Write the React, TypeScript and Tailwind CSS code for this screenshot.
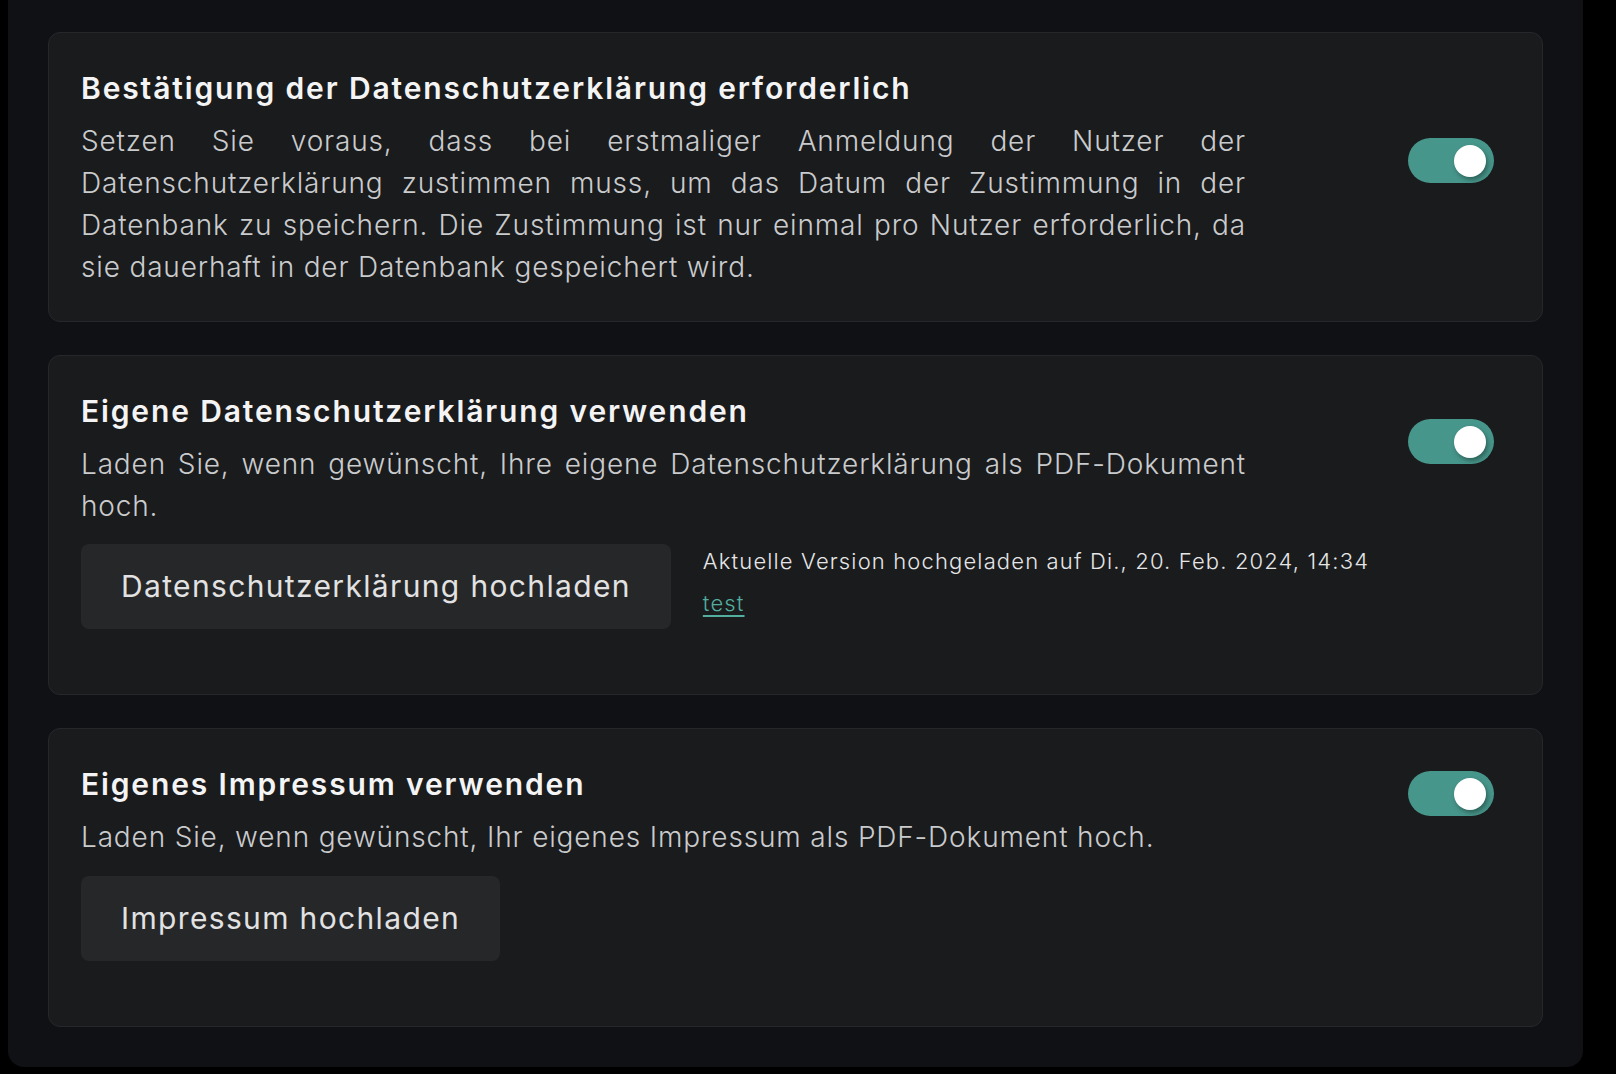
import React from 'react';

const Toggle: React.FC = () => (
  <div className="mb-[33px] mr-4 flex h-[45px] w-[86px] shrink-0 items-center justify-end rounded-full bg-[#47968b] pr-2">
    <div className="h-8 w-8 rounded-full bg-white shadow-[2px_3px_5px_rgba(0,0,0,0.35)]" />
  </div>
);

type SettingProps = {
  title: string;
  desc: string;
  children?: React.ReactNode;
};

const SettingCard: React.FC<SettingProps> = ({ title, desc, children }) => (
  <div className="rounded-xl border border-[#25272a] bg-[#1a1b1d] px-8 py-[33px]">
    <div className="flex items-center justify-between">
      <div className="w-[1165px]">
        <h3 className="text-[30px] font-semibold leading-[45px] tracking-[0.062em] text-[#f4f4f5]">{title}</h3>
        <p className="mt-[9px] text-justify text-[28px] font-light leading-[42px] tracking-[0.03em] text-[#cacbcd]">{desc}</p>
      </div>
      <Toggle />
    </div>
    {children}
  </div>
);

const UploadButton: React.FC<{ label: string }> = ({ label }) => (
  <button className="h-[85px] shrink-0 rounded-lg bg-[#262728] px-10 text-[30px] font-normal tracking-[0.045em] text-[#e2e2e3]">
    {label}
  </button>
);

const App: React.FC = () => {
  return (
    <div className="min-h-screen bg-black pl-2" style={{ fontFamily: 'Inter, "Open Sans", "Noto Sans", sans-serif' }}>
      <div className="flex w-[1575px] flex-col gap-[33px] rounded-b-2xl bg-[#101114] px-10 pb-10 pt-8">
        {/* Privacy consent */}
        <SettingCard
          title="Bestätigung der Datenschutzerklärung erforderlich"
          desc="Setzen Sie voraus, dass bei erstmaliger Anmeldung der Nutzer der Datenschutzerklärung zustimmen muss, um das Datum der Zustimmung in der Datenbank zu speichern. Die Zustimmung ist nur einmal pro Nutzer erforderlich, da sie dauerhaft in der Datenbank gespeichert wird."
        />

        {/* Own privacy policy */}
        <SettingCard
          title="Eigene Datenschutzerklärung verwenden"
          desc="Laden Sie, wenn gewünscht, Ihre eigene Datenschutzerklärung als PDF-Dokument hoch."
        >
          <div className="mb-8 mt-[17px] flex items-start gap-8">
            <UploadButton label="Datenschutzerklärung hochladen" />
            <div className="-mt-1 text-[22px] font-light leading-[42px] tracking-[0.052em] text-[#e6e6e7]">
              <div>Aktuelle Version hochgeladen auf Di., 20. Feb. 2024, 14:34</div>
              <a href="#" className="text-[#52ae9f] underline underline-offset-4">test</a>
            </div>
          </div>
        </SettingCard>

        {/* Own imprint */}
        <SettingCard
          title="Eigenes Impressum verwenden"
          desc="Laden Sie, wenn gewünscht, Ihr eigenes Impressum als PDF-Dokument hoch."
        >
          <div className="mb-8 mt-[18px] flex">
            <UploadButton label="Impressum hochladen" />
          </div>
        </SettingCard>
      </div>
    </div>
  );
};

export default App;
